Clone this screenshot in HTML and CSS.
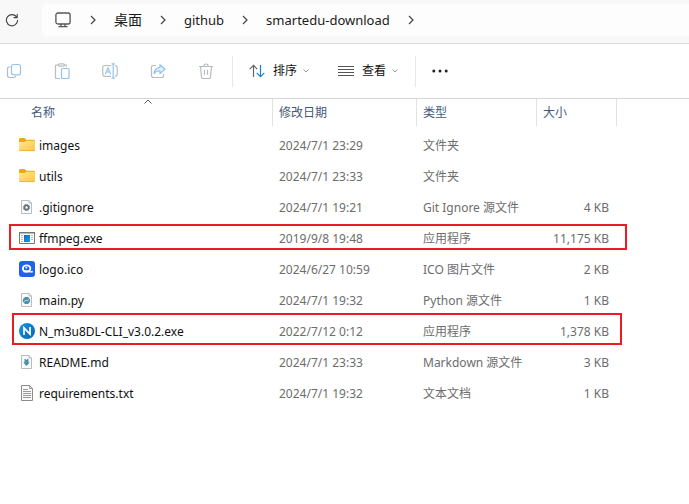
FILE: index.html
```html
<!DOCTYPE html>
<html lang="zh-CN">
<head>
<meta charset="utf-8">
<title>smartedu-download</title>
<link rel="stylesheet" href="styles.css">
</head>
<body>
<header class="address">
  <button class="icon-btn refresh" aria-label="刷新"><svg width="14" height="14" viewBox="0 0 14 14" fill="none" stroke="#444" stroke-width="1.1"><path d="M11.8 4.3A5.6 5.6 0 1 0 12.6 7M12.2 1v3.6H8.6"/></svg></button>
  <nav class="crumbs" aria-label="路径">
    <a href="#" class="crumb device" aria-label="此电脑"><svg width="18" height="16" viewBox="-1 0 18 16" fill="none" stroke="#555" stroke-width="1.3"><rect x=".9" y="1" width="14.2" height="11" rx="2"/><path d="M6 12v2.5M10 12v2.5M3.5 14.6h9"/></svg></a>
    <svg class="chev" viewBox="0 0 6 10"><path d="M1 1l4 4-4 4"/></svg>
    <a href="#" class="crumb desk">桌面</a>
    <svg class="chev" viewBox="0 0 6 10"><path d="M1 1l4 4-4 4"/></svg>
    <a href="#" class="crumb">github</a>
    <svg class="chev" viewBox="0 0 6 10"><path d="M1 1l4 4-4 4"/></svg>
    <a href="#" class="crumb">smartedu-download</a>
    <svg class="chev" viewBox="0 0 6 10"><path d="M1 1l4 4-4 4"/></svg>
  </nav>
</header>
<div class="toolbar" role="toolbar" aria-label="命令栏">
  <div class="tools">
    <button class="icon-btn" aria-label="复制"><svg width="16" height="16" viewBox="0 0 16 16" fill="none" stroke="#b8bcc0" stroke-width="1.2"><path d="M4.500 4H3.200Q1.500 4 1.500 5.800V12.500Q1.500 14.500 3.500 14.500H7.500Q9.500 14.500 9.800 12.800"/><rect x="5.500" y="1.500" width="9" height="10.300" rx="2" stroke="#8fc5ee"/></svg></button>
    <button class="icon-btn" aria-label="粘贴"><svg width="16" height="16" viewBox="0 0 16 16" fill="none" stroke="#b8bcc0" stroke-width="1.2"><path d="M4.500 2H2.500Q1.500 2 1.500 3V14.500Q1.500 15.500 2.500 15.500H6M10.500 2H12.500V3.800"/><rect x="4.500" y=".8" width="6" height="2.400" rx="1.200"/><rect x="7.500" y="5.500" width="7.500" height="10" rx="1" stroke="#8fc5ee"/></svg></button>
    <button class="icon-btn" aria-label="重命名"><svg width="16" height="16" viewBox="0 0 16 16" fill="none" stroke="#b8bcc0" stroke-width="1.2"><path d="M9 2.500H3Q.7 2.500 .7 5v5.500Q.7 13.300 3 13.300H9M13 2.500Q15.300 2.500 15.300 5v5.500Q15.300 13.300 13 13.300"/><path stroke="#8fc5ee" d="M3.300 11.200L6 4.700l2.700 6.500M4.300 9H7.700M11.200 1v14M9.500.8h3.400M9.500 15.200h3.400"/></svg></button>
    <button class="icon-btn" aria-label="共享"><svg width="16" height="16" viewBox="0 0 16 16" fill="none" stroke="#b8bcc0" stroke-width="1.2"><path d="M6 2.500H3.500Q1.500 2.500 1.500 4.500V12.500Q1.500 14.500 3.500 14.500H11.500Q13.500 14.500 13.500 12.500V11"/><path stroke="#8fc5ee" fill="#e3f2fc" stroke-linejoin="round" d="M10 1.700L15 6.300 10 10.500V8Q6.500 7.500 4 10.500 4.500 5 10 4.300z"/></svg></button>
    <button class="icon-btn" aria-label="删除"><svg width="16" height="16" viewBox="0 0 16 16" fill="none" stroke="#b8bcc0" stroke-width="1.2"><path d="M1 3.500H15M5.800 3.200Q6 1 8 1t2.200 2.200M2.500 3.500L3.500 14Q3.700 15.500 5 15.500H11Q12.300 15.500 12.500 14L13.500 3.500M6.500 6.800v5M9.500 6.800v5"/></svg></button>
  </div>
  <div class="menus">
    <button class="menu-btn"><svg width="16" height="14" viewBox="0 0 16 14" fill="none" stroke-width="1.200"><path stroke="#666" d="M4.500 13V1.500M.7 5.200L4.500 1.300 8.200 5.200"/><path stroke="#1683d8" d="M11.500 1V12.500M7.700 8.800L11.500 12.700 15.300 8.800"/></svg><span>排序</span><svg class="down" viewBox="0 0 6 4"><path d="M.5 .5L3 3 5.500 .5"/></svg></button>
    <button class="menu-btn"><svg width="16" height="14" viewBox="0 0 16 14" stroke="#555"><path d="M0 2.500H16M0 5.500H16M0 8.500H16M0 11.500H16"/></svg><span>查看</span><svg class="down" viewBox="0 0 6 4"><path d="M.5 .5L3 3 5.500 .5"/></svg></button>
  </div>
  <button class="icon-btn more" aria-label="更多"><svg width="16" height="4" viewBox="0 0 16 4" fill="#222"><circle cx="1.800" cy="2" r="1.500"/><circle cx="8" cy="2" r="1.500"/><circle cx="14.200" cy="2" r="1.500"/></svg></button>
</div>
<main>
<table class="files">
  <colgroup><col class="c-name"><col class="c-date"><col class="c-type"><col class="c-size"><col></colgroup>
  <thead>
    <tr><th class="first">名称<svg class="sort" viewBox="0 0 8 5"><path d="M.5 4.500L4 1l3.500 3.500"/></svg></th><th>修改日期</th><th>类型</th><th>大小</th><td></td></tr>
  </thead>
  <tbody>
    <tr><td><div class="name"><svg class="ico" viewBox="0 0 16 16"><use href="#folder"/></svg>images</div></td><td>2024/7/1 23:29</td><td>文件夹</td><td></td><td></td></tr>
    <tr><td><div class="name"><svg class="ico" viewBox="0 0 16 16"><use href="#folder"/></svg>utils</div></td><td>2024/7/1 23:33</td><td>文件夹</td><td></td><td></td></tr>
    <tr><td><div class="name"><svg class="ico" viewBox="0 0 16 16"><use href="#page"/><circle cx="7.500" cy="8.500" r="2.100" fill="none" stroke="#62717c" stroke-width="1.700"/><circle cx="7.500" cy="8.500" r="3.200" fill="none" stroke="#62717c" stroke-width="1" stroke-dasharray="1.250 1.263"/></svg>.gitignore</div></td><td>2024/7/1 19:21</td><td>Git Ignore 源文件</td><td class="size">4 KB</td><td></td></tr>
    <tr class="marked wide"><td><div class="name"><svg class="ico" viewBox="0 0 16 16"><path fill="#fff" stroke="#777" d="M.5 2.500h15v11H.5z"/><path fill="#777" d="M0 2h16v1.500H0z"/><path stroke="#bbb" d="M2 5.500h2M2 7.500h2M2 9.500h2M2 11.500h2M12 5.500h2M12 7.500h2M12 9.500h2"/><path fill="url(#blue)" d="M5 5h6v7H5z"/></svg>ffmpeg.exe</div></td><td>2019/9/8 19:48</td><td>应用程序</td><td class="size">11,175 KB</td><td></td></tr>
    <tr><td><div class="name"><svg class="ico" viewBox="0 0 16 16"><rect width="16" height="16" rx="3" fill="#1f62ed"/><ellipse cx="7.600" cy="7.600" rx="3.700" ry="3.200" fill="none" stroke="#fff" stroke-width="1.900"/><path d="M4.500 11Q7 9.300 9.500 10.300t4.300.2" fill="none" stroke="#fff" stroke-width="1.400"/><circle cx="7.300" cy="6.700" r=".9" fill="#fff"/></svg>logo.ico</div></td><td>2024/6/27 10:59</td><td>ICO 图片文件</td><td class="size">2 KB</td><td></td></tr>
    <tr><td><div class="name"><svg class="ico" viewBox="0 0 16 16"><use href="#page"/><path fill="#4b91aa" d="M6.200 5h2.600q1 0 1 1.300h.4q1 .4 1 2.200t-1 2.200H9.800q0 1.300-1 1.300H6.200q-1 0-1-1.300h-.4q-1-.4-1-2.200t1-2.200h.4q0-1.300 1-1.300z"/><path stroke="#d5e6ec" stroke-width=".8" fill="none" d="M5.300 9.800q.2-1.300 1-1.300h2.400q.9 0 1-1.300"/></svg>main.py</div></td><td>2024/7/1 19:32</td><td>Python 源文件</td><td class="size">1 KB</td><td></td></tr>
    <tr class="marked tall"><td><div class="name"><svg class="ico" viewBox="0 0 16 16"><circle cx="8" cy="8" r="8" fill="url(#orb)"/><path d="M5 12V4.800L11 11.200V4" fill="none" stroke="#fff" stroke-width="1.700"/></svg>N_m3u8DL-CLI_v3.0.2.exe</div></td><td>2022/7/12 0:12</td><td>应用程序</td><td class="size">1,378 KB</td><td></td></tr>
    <tr><td><div class="name"><svg class="ico" viewBox="0 0 16 16"><use href="#page"/><path fill="#4b91aa" d="M5.500 5h1l1 1 1-1h1V8.500h1.300L7.500 12 4.200 8.500h1.300z"/></svg>README.md</div></td><td>2024/7/1 23:33</td><td>Markdown 源文件</td><td class="size">3 KB</td><td></td></tr>
    <tr><td><div class="name"><svg class="ico" viewBox="0 0 16 16"><path d="M2.500.5h8l3 3v12h-11z" fill="#fafafa" stroke="#8b8b8b"/><path d="M10.500.5v3h3M4 4.500h5M4 6.500h8M4 8.500h8M4 10.500h8M4 12.500h8" fill="none" stroke="#999"/></svg>requirements.txt</div></td><td>2024/7/1 19:32</td><td>文本文档</td><td class="size">1 KB</td><td></td></tr>
  </tbody>
</table>
</main>
<svg class="defs" width="0" height="0" aria-hidden="true">
  <defs>
    <linearGradient id="gold" x2="1" y2="1"><stop stop-color="#ffe69c"/><stop offset="1" stop-color="#fdc83c"/></linearGradient>
    <linearGradient id="blue" x2="1" y2="1"><stop stop-color="#0a6fc2"/><stop offset="1" stop-color="#1b9bea"/></linearGradient>
    <linearGradient id="orb" x2="1" y2="1"><stop stop-color="#1496ea"/><stop offset="1" stop-color="#0b62b0"/></linearGradient>
    <g id="folder"><path fill="#eeaa0c" d="M0 2.500Q0 1 1.300 1H5.500L7.500 2.700H15Q16 2.700 16 4V8H0z"/><path fill="url(#gold)" d="M0 5H5.500L7.500 3.700H16V13Q16 14 15 14H1Q0 14 0 13z"/><path stroke="#e9ae2b" stroke-width=".8" d="M.5 13.600h15"/></g>
    <g id="page"><path fill="#fbfbfb" stroke="#b9bdc0" d="M2.500 1.500h7.500l2.500 2.500v10.500h-10z"/><path fill="none" stroke="#b9bdc0" d="M10 1.500v2.500h2.500"/></g>
  </defs>
</svg>
</body>
</html>
```
FILE: styles.css
```css
*, ::before, ::after { box-sizing: border-box; }
body {
  margin: 0;
  background: #fff;
  color: #111;
  font: 12px/20px "Noto Sans", "Noto Sans CJK SC", sans-serif;
}
button { border: 0; padding: 0; background: none; font: inherit; color: inherit; }
svg { display: block; flex: none; }
.defs { position: absolute; }

.address {
  display: flex;
  height: 44px;
  padding: 4px 0 7px 5px;
  background: #f8f8f8;
  border-bottom: 1px solid #dadada;
}
.refresh { width: 37px; display: flex; align-items: center; }
.crumbs {
  flex: 1;
  display: flex;
  align-items: center;
  gap: 18px;
  padding-left: 12px;
  background: #fdfdfd;
  border-radius: 5px 0 0 5px;
  font-size: 13px;
}
.crumb { color: #1a1a1a; text-decoration: none; }
.crumb.desk { font-size: 14px; }
.chev { width: 6px; height: 10px; fill: none; stroke: #444; stroke-width: 1.2; }

.toolbar { display: flex; align-items: center; height: 55px; border-bottom: 1px solid #d5d5d5; }
.tools { display: flex; gap: 32px; padding: 0 18px 0 6px; }
.menus {
  display: flex;
  align-items: center;
  gap: 29px;
  height: 31px;
  padding: 0 17px 0 16px;
  border: solid #e8e8e8;
  border-width: 0 1px;
}
.menu-btn { display: flex; align-items: center; }
.menu-btn span { margin: 0 6px 0 8px; }
.down { width: 6px; height: 4px; fill: none; stroke: #999; }
.more { margin-left: 16px; }

.files { width: 100%; table-layout: fixed; border-collapse: separate; border-spacing: 0; color: #6d6d6d; }
.c-name { width: 273px; }
.c-date { width: 144px; }
.c-type { width: 120px; }
.c-size { width: 80px; }
.files th {
  height: 27px;
  padding: 0 6px;
  border-right: 1px solid #e2e2e2;
  color: #44597a;
  font-weight: 400;
  text-align: left;
}
.files .first { position: relative; padding-left: 31px; }
.sort { position: absolute; top: 0; left: 144px; width: 8px; height: 5px; fill: none; stroke: #555; }
.files tbody::before { content: ""; display: block; height: 4px; }
.files tbody td { height: 31px; padding: 1px 6px 0; white-space: nowrap; }
.files tbody .size { padding-right: 8px; text-align: right; }
.name { display: flex; align-items: center; gap: 4px; padding-left: 13px; color: #111; }
.ico { width: 16px; height: 16px; margin-bottom: 2px; }

.marked { position: relative; }
.marked::after { content: ""; position: absolute; border: 2px solid #ec1c24; pointer-events: none; }
.wide::after { top: 1px; left: 9px; width: 618px; height: 26px; }
.tall::after { top: -3px; left: 12px; width: 610px; height: 32px; }
```
